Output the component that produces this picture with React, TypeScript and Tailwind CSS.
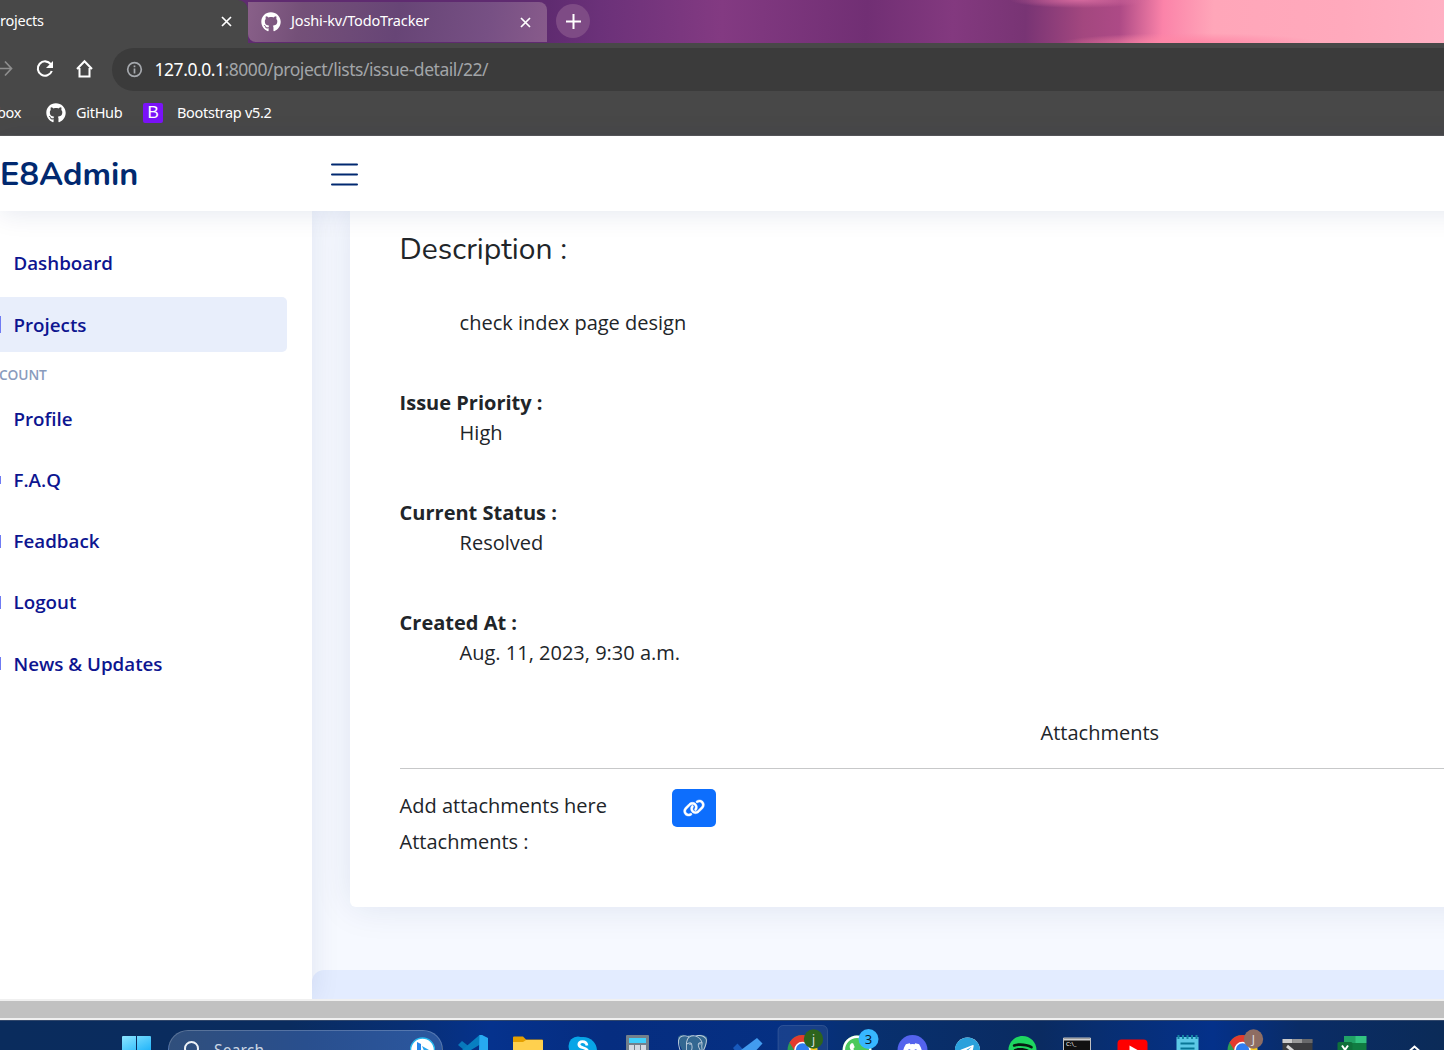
import React from "react";
import { FaGithub, FaDiscord, FaSpotify, FaTelegram, FaSkype, FaWhatsapp } from "react-icons/fa";
import { FaLink } from "react-icons/fa6";
import { SiPostgresql } from "react-icons/si";

const ui = "font-['Noto_Sans','Open_Sans',sans-serif]";

function Cross({ className = "" }: { className?: string }) {
  return (
    <svg className={`shrink-0 ${className}`} width="11" height="11" viewBox="0 0 11 11" stroke="#fff" strokeWidth="1.7">
      <path d="M1 1l9 9M10 1l-9 9" />
    </svg>
  );
}

function TabStrip() {
  return (
    <div className="flex h-[43px] overflow-hidden bg-[radial-gradient(ellipse_70px_8px_at_1080px_0px,#d3689d_0%,transparent_100%),radial-gradient(ellipse_130px_10px_at_1190px_43px,#ff87a6_0%,transparent_100%),linear-gradient(92deg,#5f2b70_0%,#5f2b70_38%,#6b3179_41.5%,#833a82_50%,#712f74_60%,#83397f_66%,#783474_71%,#a3477f_75%,#ad4a86_77.5%,#fb83a9_80.5%,#ffa6b9_84%,#ffa9bc_93%,#ffb0c3_100%)]">
      <div className="flex w-[248px] items-center rounded-tr-[10px] bg-[#484848]">
        <span className="-mt-[2px] w-[221px] whitespace-nowrap text-[14.5px] tracking-[-0.25px] text-white">rojects</span>
        <Cross />
      </div>
      <div className="mt-[2px] flex h-[40px] w-[299px] items-center rounded-tr-lg rounded-bl-lg bg-[linear-gradient(100deg,#896089_0%,#745078_18%,#674576_50%,#775084_80%,#885b8b_100%)] pl-[13px]">
        <FaGithub size={20} color="#fff" className="shrink-0" />
        <span className="-mt-[2px] ml-[10px] w-[229px] whitespace-nowrap text-[14.5px] tracking-[-0.15px] text-white">Joshi-kv/TodoTracker</span>
        <Cross />
      </div>
      <div className="mt-[4px] ml-[9px] flex size-[34px] items-center justify-center rounded-full bg-[#7e4b85]">
        <svg width="15" height="15" viewBox="0 0 15 15" stroke="#fff" strokeWidth="2"><path d="M7.5 0v15M0 7.5h15" /></svg>
      </div>
    </div>
  );
}

function Toolbar() {
  return (
    <div className="h-[93px] border-b border-[#585858] bg-[#484848] pt-[5px]">
      <div className="flex h-[43px] items-center">
        <svg width="112" height="43" viewBox="0 0 112 43" fill="none" className="shrink-0">
          <path d="M0 20.5h11M5 13.5l6.500 7-6.500 7" stroke="#8e8e8e" strokeWidth="1.7" />
          <path d="M50.8 16.2A7.2 7.2 0 1 0 51.8 23" stroke="#fff" strokeWidth="2.1" />
          <path d="M53 13v7h-7z" fill="#fff" />
          <path d="M79.500 20v8.500h10V20M77 21l7.500-7.800L92 21" stroke="#fff" strokeWidth="2" />
        </svg>
        <div className="flex h-[43px] flex-1 items-center rounded-l-full bg-[#3b3b3b] pl-[14px]">
          <svg width="17" height="17" viewBox="0 0 17 17" fill="none" stroke="#a5a8ad" strokeWidth="1.700" className="shrink-0">
            <circle cx="8.500" cy="8.500" r="6.800" /><path d="M8.500 7.500v5M8.500 4.500v1.700" />
          </svg>
          <span className="ml-[11.500px] whitespace-nowrap text-[17.5px] tracking-[-0.460px] text-[#a2a5a8]"><span className="text-white">127.0.0.1</span>:8000/project/lists/issue-detail/22/</span>
        </div>
      </div>
      <div className="flex h-[43px] items-center whitespace-nowrap text-[14.5px] tracking-[-0.3px] text-white">
        <span className="-ml-[3px] w-[49px]">box</span>
        <FaGithub size={20} className="shrink-0" />
        <span className="ml-[10px] w-[67px]">GitHub</span>
        <span className="flex size-[20px] items-center justify-center rounded-[2px] bg-[#7a12f8] font-['Liberation_Sans',sans-serif] text-[17px]">B</span>
        <span className="ml-[14px]">Bootstrap v5.2</span>
      </div>
    </div>
  );
}

function Header() {
  return (
    <header className="relative z-20 -mr-[60px] flex h-[75px] items-center bg-white shadow-[0_3px_27px_rgba(1,41,112,0.1)]">
      <span className="mt-[1px] w-[331px] font-['Nunito','Lato',sans-serif] text-[32.500px] leading-none font-bold text-[#012970]">E8Admin</span>
      <svg className="mt-[1px]" width="27" height="23" viewBox="0 0 27 23" stroke="#012970" strokeWidth="2" strokeLinecap="round"><path d="M1 1.500h25M1 11.500h25M1 21.500h25" /></svg>
    </header>
  );
}

function NavItem({ label, active = false, sliver = "" }: { label: string; active?: boolean; sliver?: string }) {
  return (
    <div className={`mb-[6.300px] flex h-[55px] w-[287px] items-center rounded-r-[5px] ${active ? "bg-[#e8eefb]" : ""}`}>
      <span className={`mr-[12.500px] w-[1px] bg-[#6f7bf3] ${sliver}`} />
      <span className="text-[18.750px] font-semibold whitespace-nowrap text-[#0d1590]">{label}</span>
    </div>
  );
}

function Sidebar() {
  return (
    <aside className="relative z-10 h-[788px] w-[312px] shrink-0 bg-white pt-[25px] font-['Open_Sans',sans-serif] shadow-[0_0_27px_rgba(1,41,112,0.1)]">
      <NavItem label="Dashboard" />
      <NavItem label="Projects" active sliver="h-[17px]" />
      <div className="-mt-[6px] -mb-[1.500px] flex h-[40px] items-center text-[13.750px] font-semibold tracking-[-0.1px] text-[#899bbd]"><span className="mt-[5px] -ml-px">COUNT</span></div>
      <NavItem label="Profile" />
      <NavItem label="F.A.Q" sliver="h-[8px]" />
      <NavItem label="Feadback" sliver="h-[13px]" />
      <NavItem label="Logout" sliver="h-[13px]" />
      <NavItem label="News &amp; Updates" sliver="h-[13px]" />
    </aside>
  );
}

function Field({ name, value }: { name: string; value: string }) {
  return (
    <div className="mb-[50px]">
      <div className="font-bold">{name}</div>
      <div className="pl-[60px]">{value}</div>
    </div>
  );
}

function Main() {
  return (
    <main className="flex h-[788px] flex-1 flex-col bg-[#f6f9ff]">
      <section className="-mr-[60px] ml-[38px] h-[696px] rounded-bl-[6px] bg-white pl-[49.600px] font-['Open_Sans',sans-serif] text-[20px] leading-[30px] text-[#212529] shadow-[0_0_37px_rgba(1,41,112,0.1)]">
        <h2 className="pt-[21px] font-['Nunito','Lato',sans-serif] text-[30px] leading-[36px]">Description :</h2>
        <p className="mt-[40px] mb-[50px] pl-[60px]">check index page design</p>
        <Field name="Issue Priority :" value="High" />
        <Field name="Current Status :" value="Resolved" />
        <Field name="Created At :" value="Aug. 11, 2023, 9:30 a.m." />
        <p className="border-b border-[#c7c8c9] pb-[20px] pl-[641px]">Attachments</p>
        <div className="mt-[20px] flex h-[38px]">
          <span className="mt-[2px] w-[272.400px]">Add attachments here</span>
          <button className="flex h-[38px] w-[44px] items-center justify-center rounded-[5px] bg-[#0d6efd] text-white"><FaLink size={22} stroke="#fff" strokeWidth={12} /></button>
        </div>
        <p>Attachments :</p>
      </section>
      <div className="mt-[63px] h-[29px] rounded-tl-[12px] bg-[#e3ecff]" />
    </main>
  );
}

function Chrome({ letter, color }: { letter: string; color: string }) {
  return (
    <>
      <circle cx="27.500" cy="30" r="15" fill="#2f9d55" />
      <path d="M14.500 22.500A15 15 0 0 1 40.500 22.500H27.500L21 33z" fill="#e33b2e" />
      <path d="M27.500 22.500h13A15 15 0 0 1 42.500 30h-15z" fill="#fbc922" />
      <circle cx="27.500" cy="30" r="7.500" fill="#2f7df0" stroke="#fff" strokeWidth="1.500" />
      <circle cx="38.500" cy="19" r="9.700" fill={color} />
      <text x="38.500" y="23.500" textAnchor="middle" fontSize="12" fill="#dedede">{letter}</text>
    </>
  );
}

const apps: React.ReactNode[] = [
  <><path d="M13 25l4-4 9 7v2h-7z" fill="#0878bb" /><path d="M17 30l17.500-15h3V23L26 30z" fill="#087fc1" /><path d="M34.500 15h2.500l6 3v12h-9z" fill="#27aaf1" /></>,
  <><path d="M13 30V17.500q0-1 1-1h9l3 3h16q1 0 1 1V30z" fill="#e5a000" /><path d="M13 22h10l3-2h16q1 0 1 1v9H13z" fill="#ffd04e" /></>,
  <><circle cx="23" cy="26" r="9.500" fill="#08a5e7" /><circle cx="28" cy="31" r="14" fill="#08a5e7" /><FaSkype x={13} y={16} size={29} color="#08a5e7" /><path d="M32 25.500c-1-5.500-9-4.500-8-.5 1 3.500 8 2 8.500 6" fill="none" stroke="#fff" strokeWidth="2.800" /></>,
  <><rect x="16" y="15" width="23" height="20" rx="1" fill="#73808b" /><path d="M19 18h17v5H19z" fill="#40cffa" /><path d="M19 25h5v5h-5zM25 25h5v5h-5zM31 25h5v5h-5z" fill="#d5dae2" /></>,
  <><path d="M13 17q4-4 8-1 5-2 9 0 7-3 12 1 1 6-3 13H17q-4-8-4-13" fill="#336791" /><SiPostgresql x={12.5} y={15} size={30} color="#c2d0df" /></>,
  <><path d="M13 28l4.500-4.500 6 6.500h-9z" fill="#185abd" /><path d="M21 30l16-12 5.500 5.500-6 6.500z" fill="#429cf0" /></>,
  <><rect x="3" y="5.500" width="49.500" height="36" rx="5" fill="#fff" fillOpacity=".08" stroke="#fff" strokeOpacity=".12" /><Chrome letter="j" color="#2d641d" /></>,
  <><circle cx="27" cy="30" r="14.500" fill="#4cc95c" /><FaWhatsapp x={10.5} y={13.5} size={33} color="#fff" /><circle cx="38.500" cy="19" r="10" fill="#37b8ff" /><text x="38.500" y="24" textAnchor="middle" fontSize="13" fill="#0b1b2b">3</text></>,
  <><circle cx="27.500" cy="30" r="15" fill="#5463ed" /><FaDiscord x={17} y={20} size={21} color="#fff" /></>,
  <><circle cx="27.500" cy="30" r="12.500" fill="#fff" /><FaTelegram x={14.5} y={17} size={26} color="#2aa1dc" /></>,
  <><circle cx="27.500" cy="30" r="13" fill="#071b12" /><FaSpotify x={13} y={15.5} size={29} color="#1ed760" /></>,
  <><path d="M13.500 18h27v14h-27z" fill="#111" stroke="#c1c1c1" /><path d="M14 19.500h26" stroke="#d0d0d0" strokeWidth="2" /><text x="16" y="26" fontSize="6" fill="#fff">C:\_</text></>,
  <><rect x="12.500" y="19.500" width="30" height="22" rx="4" fill="#f00" /><path d="M24.500 25.500l8 4.500v1h-8z" fill="#fff" /></>,
  <><path d="M16.500 17h22v15h-22z" fill="#5cc8e6" /><path d="M18.500 15v4M23 15v4M27.500 15v4M32 15v4M36.500 15v4" stroke="#1585a3" strokeWidth="2" /><path d="M20.500 23.500h14M20.500 28.500h14" stroke="#087696" strokeWidth="2" /></>,
  <Chrome letter="J" color="#8e6d63" />,
  <><rect x="12.500" y="19" width="30" height="20" rx="1" fill="#3c3d40" /><path d="M12.500 19h10v4h-10z" fill="#ccc" /><path d="M22.500 19h10v4h-10z" fill="#999" /><path d="M32.500 19h10v4h-10z" fill="#68696b" /><path d="M17 26l6 5" stroke="#d8d8d8" strokeWidth="3" /></>,
  <><path d="M19 16h12v14H19z" fill="#21a366" /><path d="M30.500 16h11v7h-11z" fill="#33c481" /><path d="M30.500 23h11v7h-11zM19 23h12v7H19z" fill="#107c41" /><rect x="12.500" y="22" width="15" height="15" rx="1.500" fill="#0f703b" /><path d="M17 25.500l5.500 8M23 25.500l-5.500 8" stroke="#fff" strokeWidth="2" /></>,
];

function Taskbar() {
  return (
    <div className="flex h-[30px] overflow-hidden border-t border-[#31476b] bg-[linear-gradient(90deg,#0a2c5d_0%,#0a2c5f_20%,#082f74_28%,#05328d_34%,#062d80_42%,#053083_55%,#08306f_60%,#0a2b61_72%,#082e70_76%,#04318a_84%,#0a2c66_90%,#0b2b58_100%)]">
      <svg className="ml-[122px] shrink-0" width="46" height="29" viewBox="0 1 46 29">
        <defs><linearGradient id="tiles" x2="1" y2="1"><stop stopColor="#8ce5ff" /><stop offset="1" stopColor="#22b5fa" /></linearGradient></defs>
        <path d="M0 17q0-1 1-1h13v14H0zM15 16h13q1 0 1 1v13H15z" fill="url(#tiles)" />
      </svg>
      <div className="mt-[9px] flex h-[40px] w-[275px] shrink-0 rounded-full border border-white/20 bg-[linear-gradient(90deg,#304f7c,#294f8e_50%,#2b579f)] pt-[10px] pl-[14px]">
        <svg width="18" height="18" viewBox="0 0 18 18" fill="none" stroke="#eef2f7" strokeWidth="2"><circle cx="8.500" cy="7.500" r="6.500" /><path d="M4 12l-4 5" /></svg>
        <span className="ml-[13px] w-[196px] text-[15.500px] leading-[18px] tracking-[0.2px] text-[#cbd5e3]">Search</span>
        <svg className="-mt-[4px]" width="25" height="25" viewBox="0 0 25 25"><circle cx="12.500" cy="13" r="12" fill="#fff" stroke="#24b6ed" strokeWidth="1.500" /><path d="M7 5l4 2v14l-4-2z" fill="#2386ec" /><path d="M12 9l7 4v6l-8 2 4-5z" fill="#2ba5ee" /></svg>
      </div>
      <div className="ml-[2px] grid shrink-0 grid-cols-[repeat(17,55px)]">
        {apps.map((art, i) => (
          <svg key={i} width="55" height="29" viewBox="0 1 55 29">{art}</svg>
        ))}
      </div>
      <svg className="ml-[22px] shrink-0" width="24" height="29" viewBox="0 1 24 29" fill="none" stroke="#fff" strokeWidth="2"><path d="M7.500 31l5-4.500 5 4.500" /></svg>
    </div>
  );
}

export default function App() {
  return (
    <div className={`h-[1050px] w-[1444px] overflow-hidden bg-white ${ui}`}>
      <TabStrip />
      <Toolbar />
      <Header />
      <div className="flex h-[788px] overflow-hidden">
        <Sidebar />
        <Main />
      </div>
      <div className="h-[21px] border-t-2 border-b-2 border-[#f0f0f0] bg-[#c1c1c1]" />
      <Taskbar />
    </div>
  );
}
